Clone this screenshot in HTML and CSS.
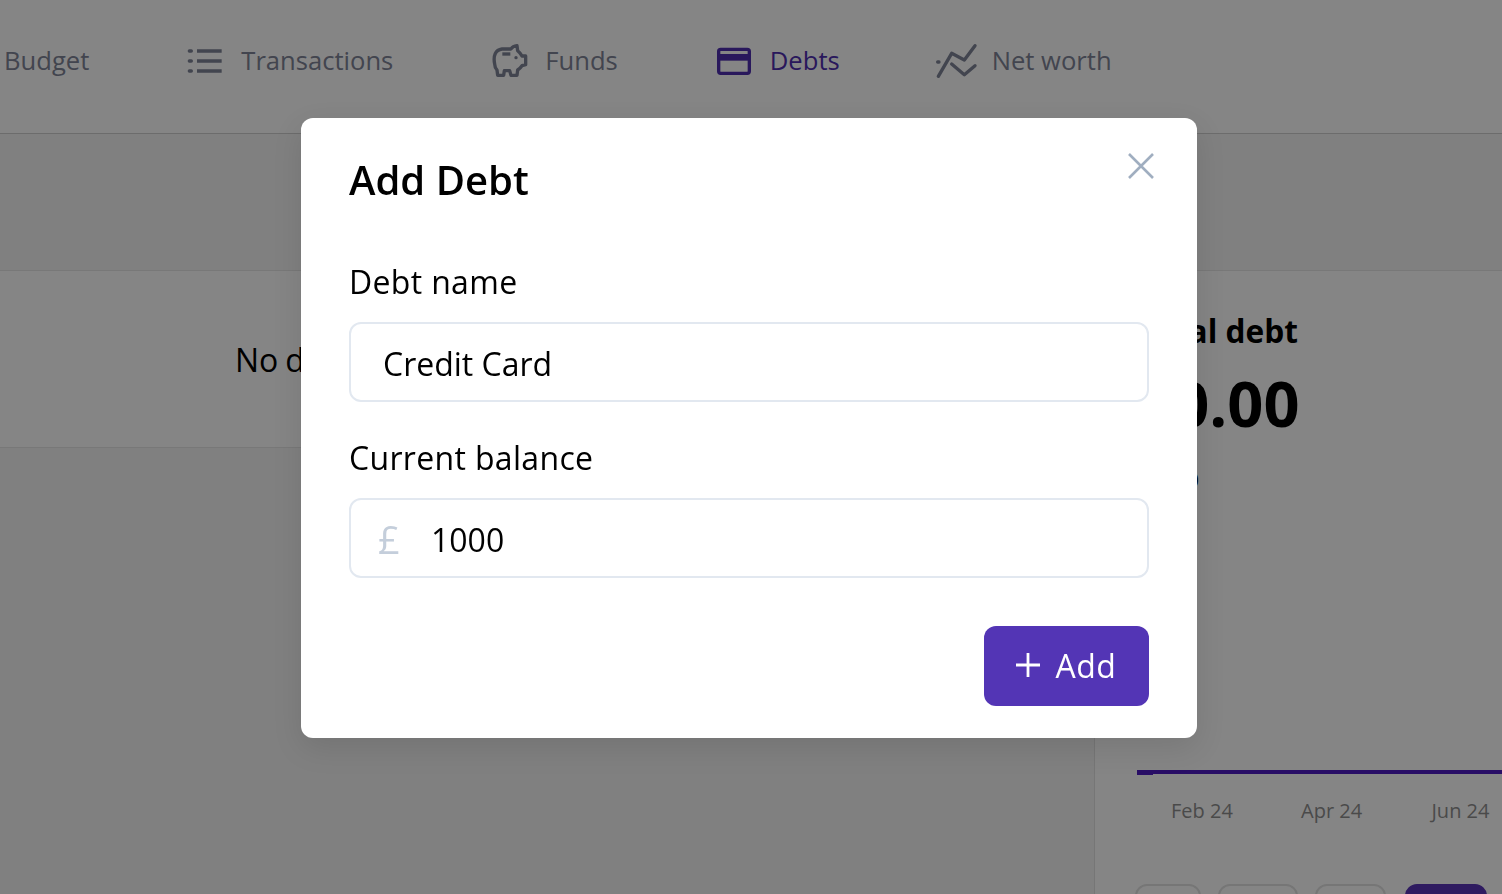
FILE: index.html
```html
<!DOCTYPE html>
<html lang="en">
<head>
<meta charset="utf-8">
<title>Add Debt</title>
<link rel="stylesheet" href="styles.css">
</head>
<body>
<div class="page">
  <nav class="nav">
    <a class="nav-item">Budget</a>
    <a class="nav-item">
      <svg class="nav-icon" viewBox="51 27 108 108" fill="none" stroke="currentColor" stroke-width="10"><path d="M81 51H155M81 81H155M81 111H155"/><path d="M58 51h6M58 81h6M58 111h6" stroke-linecap="round"/></svg>
      Transactions
    </a>
    <a class="nav-item">
      <svg class="nav-icon" viewBox="32 27 108 108" fill="none" stroke="currentColor" stroke-width="10" stroke-linejoin="round"><path d="M43 90C38 65 45 48 65 45H92C95 40 100 36 110 35L112 50C118 55 122 60 125 66H136V92L125 95C120 102 115 106 112 108L110 124H92L88 110H72L70 124H52L50 108C45 102 43 96 43 90Z"/><path d="M66 60H90"/><circle cx="107" cy="71" r="5" fill="currentColor" stroke="none"/></svg>
      Funds
    </a>
    <a class="nav-item nav-item-active">
      <svg class="nav-icon" viewBox="32 27 108 108" fill="none"><rect x="40" y="46" width="92" height="72" rx="6" stroke="currentColor" stroke-width="10"/><rect x="40" y="60" width="92" height="20" fill="currentColor"/></svg>
      Debts
    </a>
    <a class="nav-item">
      <svg class="nav-icon" viewBox="39 27 108 108" fill="none" stroke="currentColor" stroke-width="10" stroke-linecap="round" stroke-linejoin="round"><path d="M40 127L80 58L118 78L150 35"/><path d="M80 90L118 122L150 95"/><path d="M38 84h4"/></svg>
      Net worth
    </a>
  </nav>
  <div class="band"></div>
  <div class="main">
    <div class="left">
      <div class="empty-row">No debts yet. Add one to get started!</div>
    </div>
    <aside class="side">
      <h2 class="side-title">Total debt</h2>
      <div class="side-amount">£0.00</div>
      <div class="side-note">£0</div>
      <div class="chart-line"></div>
      <div class="chart-axis"><span>Feb 24</span><span>Apr 24</span><span>Jun 24</span></div>
      <div class="ranges">
        <button class="range range-a">6M</button>
        <button class="range range-b">1Y</button>
        <button class="range range-c">2Y</button>
        <button class="range range-d">All</button>
      </div>
    </aside>
  </div>
</div>
<div class="overlay"></div>
<div class="modal">
  <button class="close" aria-label="Close">
    <svg viewBox="0 0 26 26" width="26" height="26" fill="none" stroke="currentColor" stroke-width="2.6"><path d="M1 1L25 25M25 1L1 25"/></svg>
  </button>
  <h1 class="modal-title">Add Debt</h1>
  <label class="label">Debt name</label>
  <div class="input"><span>Credit Card</span></div>
  <label class="label label-second">Current balance</label>
  <div class="input input-money"><span class="currency">£</span><span>1000</span></div>
  <div class="actions">
    <button class="add">
      <svg viewBox="0 0 26 26" width="26" height="26" fill="none" stroke="currentColor" stroke-width="2.8"><path d="M13 1V25M1 13H25"/></svg>
      Add
    </button>
  </div>
</div>
</body>
</html>
```
FILE: styles.css
```css
* { box-sizing: border-box; }
html, body { margin: 0; height: 100%; overflow: hidden; }
body { font-family: "Open Sans", "Noto Sans", sans-serif; background: #fff; color: #000; }
.page { width: 1502px; height: 894px; overflow: hidden; display: flex; flex-direction: column; }
.nav { height: 134px; padding: 0 0 12px 4px; display: flex; align-items: center; gap: 98px; border-bottom: 1px solid #cfcfcf; flex: none; background: #fff; }
.nav-item { display: flex; align-items: center; gap: 18px; font-size: 25.6px; color: #7f8497; white-space: nowrap; }
.nav-item-active { color: #4f2fb0; }
.nav-icon { width: 36px; height: 36px; flex: none; overflow: visible; }
.band { height: 137px; flex: none; background: #f6f6f6; border-bottom: 1px solid #e6e6e6; }
.main { flex: 1; display: flex; min-height: 0; }
.left { width: 1094px; flex: none; background: #f6f6f6; }
.empty-row { height: 177px; padding-left: 235px; display: flex; align-items: center; font-size: 32px; word-spacing: -1.5px; background: #fff; border-bottom: 1px solid #e6e6e6; white-space: nowrap; }
.side { flex: 1; min-width: 0; background: #fff; border-left: 1px solid #e2e2e2; padding: 36px 0 0 42px; }
.side-title { margin: 0; font-size: 31.6px; line-height: 48px; font-weight: 700; white-space: nowrap; }
.side-amount { font-size: 63.2px; line-height: 86px; font-weight: 700; margin-top: 5px; }
.side-note { width: 62px; font-size: 20px; line-height: 30px; margin-top: 19px; text-align: right; white-space: nowrap; }
.chart-line { position: relative; height: 4px; margin-top: 275px; background: #4f1bc4; }
.chart-line::after { content: ""; position: absolute; left: 0; top: 4px; width: 16px; height: 1px; background: #4f1bc4; }
.chart-axis { display: grid; grid-template-columns: 130px 130.5px 130px; font-size: 20px; line-height: 28px; color: #8f8f8f; margin-top: 23px; padding-left: 34px; }
.ranges { display: flex; gap: 17px; margin: 59px 0 0 -2px; }
.range { height: 48px; border: 2px solid #e2e2e2; border-radius: 12px; background: #fff; font: inherit; font-size: 20px; padding: 0; flex: none; }
.range-a { width: 66px; }
.range-b { width: 80px; }
.range-c { width: 71px; }
.range-d { width: 82px; margin-left: 2px; background: #5a35b8; border-color: #5a35b8; color: #fff; }
.overlay { position: fixed; inset: 0; background: rgba(0, 0, 0, .48); }
.modal { position: absolute; left: 301px; top: 118px; width: 896px; height: 620px; padding: 32px 48px; background: #fff; border-radius: 12px; box-shadow: 0 10px 30px rgba(0, 0, 0, .1); }
.close { position: absolute; top: 35px; left: 827px; padding: 0; border: 0; background: none; color: #a0aec0; display: block; width: 26px; height: 26px; }
.close svg { display: block; }
.modal-title { margin: 0 0 48px; font-size: 40px; line-height: 60px; font-weight: 600; }
.label { display: block; font-size: 32px; line-height: 48px; font-weight: 500; letter-spacing: .33px; margin-bottom: 16px; white-space: nowrap; }
.label-second { margin-top: 32px; }
.input { height: 80px; border: 2px solid #e2e8f0; border-radius: 12px; padding: 2px 32px 0; display: flex; align-items: center; font-size: 32px; }
.input-money { padding-left: 27px; }
.currency { color: #c4cedb; font-size: 38px; width: 53px; flex: none; font-weight: 500; }
.actions { display: flex; justify-content: flex-end; margin-top: 48px; }
.add { height: 80px; width: 165px; border: 0; border-radius: 12px; background: #5335b5; color: #fff; font: inherit; font-size: 32px; font-weight: 500; letter-spacing: .5px; display: flex; align-items: center; justify-content: center; gap: 15px; padding: 0 2px 2px 0; }
```
